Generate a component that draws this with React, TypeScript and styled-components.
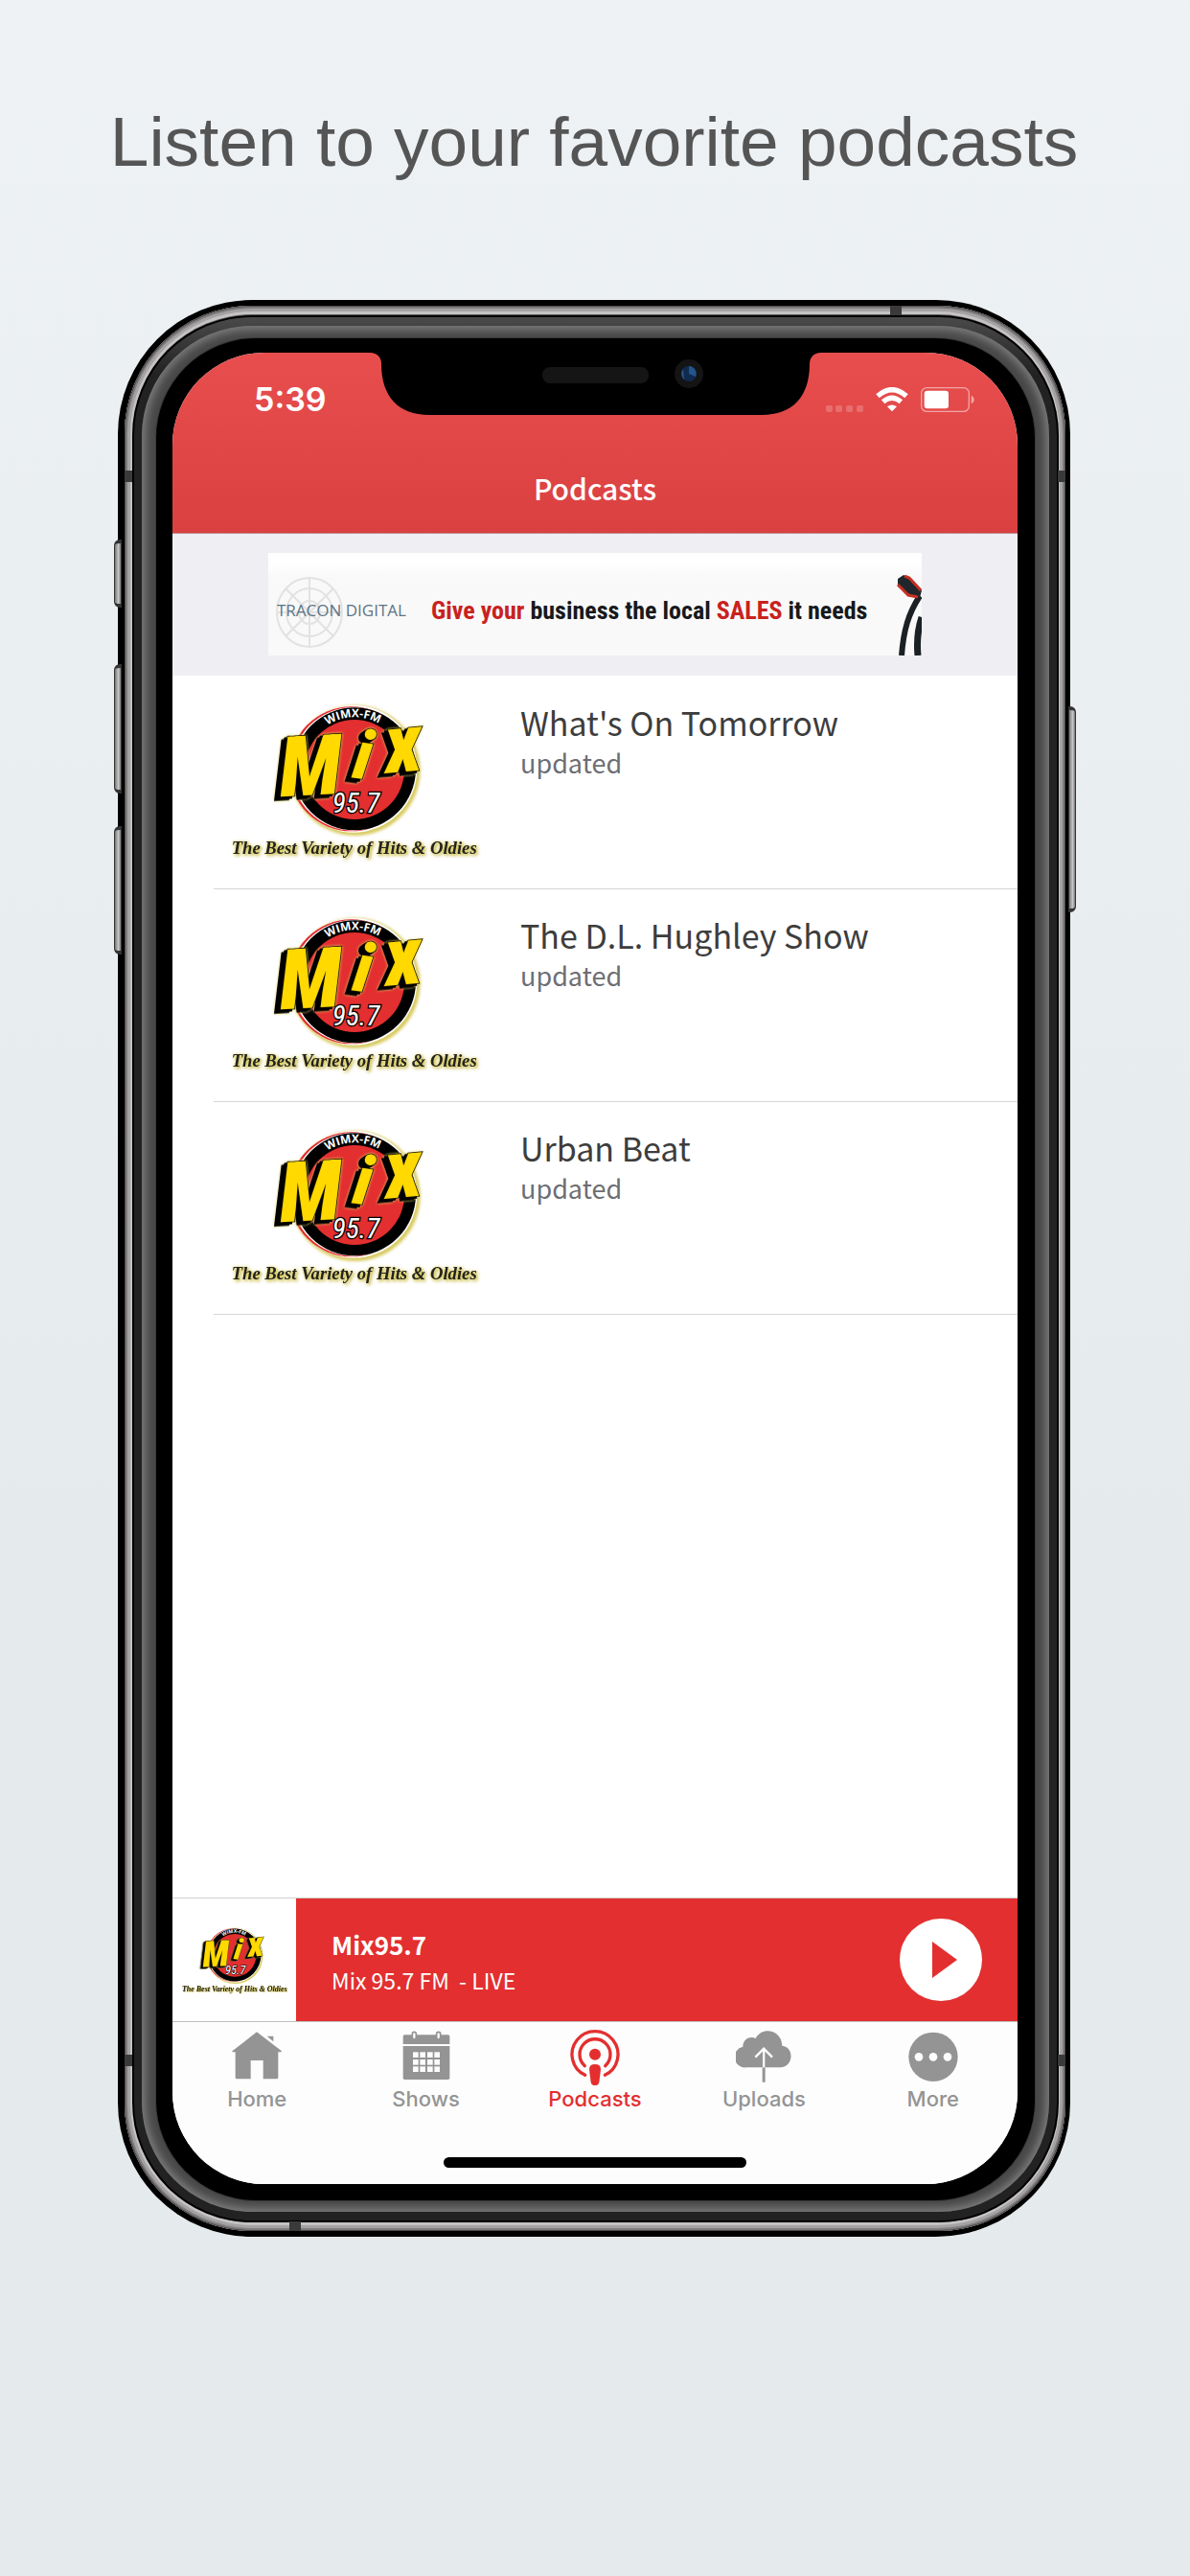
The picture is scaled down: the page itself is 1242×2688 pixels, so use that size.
import React from "react";
import styled, { createGlobalStyle, css } from "styled-components";

const red = "#e32f2f";
const grey = "#949494";
const sourceSans = `"Noto Sans CJK SC", "Noto Sans", sans-serif`;
const condensed = "Roboto Condensed, Liberation Sans Narrow, Roboto, sans-serif";

const GlobalStyle = createGlobalStyle`
  *, *::before, *::after { box-sizing: border-box; }
  html { min-height: 100%; background: linear-gradient(#eef2f5, #e5eaed 60%); }
  body { margin: 0; }
  a { color: inherit; text-decoration: none; }
  button { border: 0; padding: 0; background: none; cursor: pointer; font: inherit; color: inherit; }
  h1, h2, h3, p, ul { margin: 0; padding: 0; font-weight: inherit; }
  svg { display: block; }
`;

const Page = styled.div`
  display: flex;
  flex-direction: column;
  align-items: center;
  padding: 104px 2px 354px 0;
  min-height: 100vh;
`;

const Headline = styled.h1`
  font: 400 73px/88px "Liberation Sans", Arial, sans-serif;
  color: #555;
  text-align: center;
  margin-bottom: 121px;
`;

const Phone = styled.div`
  position: relative;
  width: 100%;
  max-width: 994px;
  padding: 6px 5px 6px 7px;
  border-radius: 140px;
  background: #000;
`;

const Steel = styled.div`
  padding: 10px 7px 9px 8px;
  border-radius: 133px;
  background: #575555;
  box-shadow: inset 0 0 0 1px #4a4848, inset 0 0 0 3px #7f7c7d, inset 0 0 0 6px #a5a2a3, inset 0 0 0 9px #c4c2c2;
`;

const Groove = styled.div`
  padding: 2px;
  border-radius: 125px;
  background: #000;
`;

const Gasket = styled.div`
  padding: 9px 8px;
  border-radius: 123px;
  background: linear-gradient(#4a4a4a, #222 60px);
`;

const Bevel = styled.div`
  padding: 13px 15px 12px;
  border-radius: 115px;
  background: #484848;
  box-shadow: inset 0 0 8px 4px #7c7c7c;
`;

const Glass = styled.div`
  padding: 15px 18px 17px 17px;
  border-radius: 104px;
  background: #000;
  box-shadow: 0 0 0 1px #3a3a3a;
`;

const Screen = styled.main`
  position: relative;
  display: flex;
  flex-direction: column;
  min-height: 1911px;
  overflow: hidden;
  border-radius: 96px;
  background: #fff;
`;

const SideKey = styled.span<{ $side: "left" | "right"; $top: number; $length: number }>`
  position: absolute;
  top: ${(p) => p.$top}px;
  ${(p) => p.$side}: ${(p) => (p.$side === "left" ? -4 : -6)}px;
  width: 8px;
  height: ${(p) => p.$length}px;
  border: 1px solid #333;
  border-width: 4px 1px;
  border-radius: ${(p) => (p.$side === "left" ? "6px 0 0 6px" : "0 6px 6px 0")};
  background: linear-gradient(90deg, #777, #c8c8c8 60%, #777);
`;

const Antenna = styled.span<{ $edge: "top" | "bottom" | "left" | "right"; $at: number }>`
  position: absolute;
  background: #3a3a3a;
  ${(p) =>
    p.$edge === "top" || p.$edge === "bottom"
      ? css`
          ${p.$edge}: 6px;
          left: ${p.$at}px;
          width: 12px;
          height: 10px;
        `
      : css`
          ${p.$edge}: ${p.$edge === "left" ? 7 : 5}px;
          top: ${p.$at}px;
          width: 8px;
          height: 12px;
        `}
`;

const NotchArt = styled.svg`
  position: absolute;
  top: 0;
  left: 206px;
`;

const TopBar = styled.header`
  background: linear-gradient(#e84e4e, #da4040);
  color: #fff;
  border-bottom: 1px solid #b98a90;
`;

const StatusBar = styled.div`
  display: flex;
  align-items: center;
  justify-content: space-between;
  height: 98px;
  padding: 0 43px 0 85px;
`;

const Clock = styled.time`
  font: 600 34px/40px Inter, sans-serif;
`;

const StatusIcons = styled.div`
  display: flex;
  align-items: center;
  gap: 13px;
`;

const ScreenTitle = styled.h2`
  font: 500 30px/44px ${sourceSans};
  padding: 21px 0 25px;
  text-align: center;
`;

const AdStrip = styled.aside`
  display: flex;
  justify-content: center;
  padding: 20px 0 21px;
  background: #efeef3;
`;

const Ad = styled.a`
  display: flex;
  align-items: center;
  position: relative;
  width: 682px;
  height: 107px;
  overflow: hidden;
  background: linear-gradient(#fefefe 12px, #f9f9f9 26px);
`;

const AdBrand = styled.span`
  position: relative;
  width: 170px;
  padding-left: 9px;
  font: 400 17px/28px "Open Sans", sans-serif;
  color: #5c7587;
  margin-top: 12px;
  white-space: nowrap;
`;

const AdCopy = styled.span`
  font: 700 26px/40px ${condensed};
  color: #17191d;
  margin-top: 12px;
  white-space: nowrap;
  em {
    font-style: normal;
    color: #c8221e;
  }
`;

const AdTarget = styled.svg`
  position: absolute;
  left: 8px;
  top: 24px;
`;

const AdCables = styled.svg`
  position: absolute;
  right: 0;
  bottom: 0;
`;

const ShowList = styled.ul`
  flex: 1;
  list-style: none;
  padding: 1px 0 0 43px;
`;

const ShowRow = styled.li`
  border-bottom: 1px solid #d6d6d9;
`;

const ShowLink = styled.a`
  display: flex;
  gap: 43px;
  padding: 24px 17px 27px;
`;

const ShowName = styled.h3`
  font: 400 34px/48px ${sourceSans};
  color: #3d3d3d;
`;

const ShowNote = styled.p`
  font: 400 27px/36px ${sourceSans};
  color: #6c6e73;
`;

const LogoArt = styled.svg`
  overflow: visible;
`;

const MixLetters = styled.g`
  fill: #ffd900;
  stroke: #1a1600;
  stroke-width: 5px;
  paint-order: stroke;
  filter: drop-shadow(-9px 5px 0 #000) drop-shadow(-9px 6px 0 #000) drop-shadow(0 0 5px #e3d56c);
`;

const Frequency = styled.text`
  fill: #fff;
  stroke: #000;
  stroke-width: 8px;
  paint-order: stroke;
`;

const Tagline = styled.text`
  fill: #222;
  filter: drop-shadow(0 0 4px #e6d95a) drop-shadow(5px 5px 4px #cbbd58);
`;

const Player = styled.section`
  display: flex;
  height: 130px;
  border-top: 1px solid #cfcfcf;
  border-bottom: 1px solid #c0c0c0;
`;

const Cover = styled.div`
  display: flex;
  align-items: center;
  justify-content: center;
  width: 129px;
`;

const NowPlaying = styled.div`
  flex: 1;
  display: flex;
  align-items: center;
  justify-content: space-between;
  padding: 0 37px;
  background: ${red};
  color: #fff;
`;

const Station = styled.p`
  font: 700 26px/38px ${sourceSans};
  padding-top: 4px;
`;

const Track = styled.p`
  font: 400 23px/36px ${sourceSans};
  white-space: pre;
`;

const PlayButton = styled.button`
  width: 86px;
  height: 86px;
  border-radius: 50%;
  background: #fff;
`;

const TabBar = styled.nav`
  display: grid;
  grid-template-columns: repeat(5, 1fr);
  background: #fdfdfd;
  padding-top: 8px;
`;

const Tab = styled.button<{ $active?: boolean }>`
  display: flex;
  flex-direction: column;
  align-items: center;
  color: ${(p) => (p.$active ? red : grey)};
  font: 500 22px/28px Inter, sans-serif;
`;

const HomeArea = styled.div`
  display: flex;
  justify-content: center;
  padding: 47px 0 17px;
  background: #fdfdfd;
`;

const HomeIndicator = styled.span`
  width: 316px;
  height: 11px;
  border-radius: 6px;
  background: #000;
`;

function MixLogo({ id, width, height }: { id: string; width: number; height: number }) {
  return (
    <LogoArt width={width} height={height} viewBox="120 90 780 510" role="img" aria-label="Mix 95.7 WIMX-FM">
      <defs>
        <filter id={`${id}-glow`} x="-20%" y="-20%" width="140%" height="140%">
          <feGaussianBlur stdDeviation="5" />
        </filter>
        <path id={`${id}-arc`} d="M352 307a158 162 0 0 1 316 0" />
      </defs>
      <circle cx="512" cy="312" r="204" fill="#d9cb62" filter={`url(#${id}-glow)`} />
      <circle cx="507" cy="307" r="199" fill="#fff" />
      <circle cx="500" cy="307" r="195" fill={red} />
      <circle cx="506" cy="307" r="193" fill="#fff" />
      <circle cx="510" cy="307" r="192" fill="#000" />
      <circle cx="510" cy="309" r="156" fill={red} />
      <text fontFamily="Open Sans, sans-serif" fontWeight="700" fontSize="36" fill="#fff" textAnchor="middle">
        <textPath href={`#${id}-arc`} startOffset="49%">
          WIMX-FM
        </textPath>
      </text>
      <MixLetters fontFamily={condensed} fontWeight="900" fontStyle="italic">
        <text x="280" y="394" fontSize="262" transform="rotate(-3 280 394)">
          M
        </text>
        <text x="500" y="334" fontSize="214" transform="rotate(8 500 334)">
          i
        </text>
        <text x="612" y="320" fontSize="256" transform="rotate(-5 612 320)">
          x
        </text>
      </MixLetters>
      <Frequency x="440" y="444" fontFamily={condensed} fontStyle="italic" fontSize="88">
        95.7
      </Frequency>
      <Tagline x="125" y="572" fontFamily="Liberation Serif, serif" fontWeight="700" fontStyle="italic" fontSize="56">
        The Best Variety of Hits &amp; Oldies
      </Tagline>
    </LogoArt>
  );
}

function HomeIcon() {
  return (
    <svg width="58" height="58" viewBox="238 474 174 174" fill="currentColor" aria-hidden="true">
      <path d="M325 481 403 541l-2 3h-9v80q0 4-4 4h-43v-58h-39v58h-44q-4 0-4-4v-80h-9l-1-3z" />
      <path d="M357 494h20v17z" />
    </svg>
  );
}

function CalendarIcon() {
  const cols = [814, 836, 859, 881];
  const rows = [544, 567, 589];
  return (
    <svg width="58" height="58" viewBox="769 474 174 174" fill="currentColor" aria-hidden="true">
      <path d="M783 519v-24q0-5 5-5h136q5 0 5 5v24z" />
      <path d="M783 525h146v100q0 5-5 5H788q-5 0-5-5z" />
      {[818, 894].map((x) => (
        <rect key={x} x={x - 6} y="481" width="12" height="23" rx="6" fill="#fdfdfd" stroke="currentColor" strokeWidth="5" />
      ))}
      {rows.map((y) => cols.map((x) => <rect key={`${x}-${y}`} x={x} y={y} width="17" height="17" fill="#fdfdfd" />))}
    </svg>
  );
}

function PodcastIcon() {
  return (
    <svg width="58" height="58" viewBox="-26 474 174 174" fill="none" stroke="currentColor" strokeWidth="10" strokeLinecap="round" aria-hidden="true">
      <path d="M30 616a72 72 0 1 1 62 0" />
      <path d="M29 587a48 48 0 1 1 64 0" />
      <circle cx="61" cy="551" r="18" fill="currentColor" stroke="none" />
      <path d="M43 598q0-16 18-16t18 16l-5 40q-2 10-13 10t-13-10z" fill="currentColor" stroke="none" />
    </svg>
  );
}

function UploadIcon() {
  return (
    <svg width="58" height="58" viewBox="503 474 174 174" fill="currentColor" aria-hidden="true">
      <path d="M536 592a33 33 0 0 1-11-65c0-26 25-34 40-26 22-40 82-25 83 23 38 4 37 64-4 68z" />
      <path d="M586 592h9v46h-9z" />
      <path d="M590.500 592v-58M564 560l26.500-27 26.500 27" fill="none" stroke="#fdfdfd" strokeWidth="7" />
    </svg>
  );
}

function MoreIcon() {
  return (
    <svg width="58" height="58" viewBox="1034 474 174 174" fill="currentColor" aria-hidden="true">
      <circle cx="1121" cy="559" r="77" />
      {[1076, 1121, 1166].map((x) => (
        <circle key={x} cx={x} cy="559" r="13" fill="#fdfdfd" />
      ))}
    </svg>
  );
}

function Notch() {
  return (
    <NotchArt width="471" height="66" viewBox="0 0 471 66" aria-hidden="true">
      <path d="M0 0C8 0 12 5 12 12 12 46 30 65 62 65H409c32 0 50-19 50-53C459 5 463 0 471 0z" fill="#000" />
      <rect x="180" y="15" width="111" height="17" rx="8" fill="#151515" />
      <circle cx="333" cy="22" r="15" fill="#141414" />
      <circle cx="333" cy="22" r="8" fill="#12294f" />
      <path d="M333 22V14a8 8 0 0 1 7 11z" fill="#22558c" />
      <path d="M327 17a8 8 0 0 0 1 11z" fill="#2f5583" />
    </NotchArt>
  );
}

function Indicators() {
  return (
    <StatusIcons>
      <svg width="39" height="26" viewBox="0 0 39 26" fill="#fff" fillOpacity="0.2" aria-hidden="true">
        {[0, 10, 21, 32].map((x) => (
          <rect key={x} x={x} y="19" width="7" height="7" rx="2" />
        ))}
      </svg>
      <svg width="34" height="26" viewBox="0 0 102 78" fill="none" stroke="#fff" strokeWidth="16" aria-label="Wi-Fi">
        <path d="M6 28q45-40 90 0" />
        <path d="M23 46q28-24 56 0" />
        <path d="M51 76 36 61q15-11 30 0z" fill="#fff" stroke="none" />
      </svg>
      <svg width="58" height="26" viewBox="0 0 174 78" aria-label="Battery">
        <rect x="2" y="2" width="149" height="74" rx="17" fill="none" stroke="#fff" strokeOpacity="0.5" strokeWidth="4" />
        <rect x="11" y="11" width="76" height="56" rx="9" fill="#fff" />
        <path d="M158 26q9 4 9 13t-9 13z" fill="#fff" fillOpacity="0.5" />
      </svg>
    </StatusIcons>
  );
}

const shows = ["What's On Tomorrow", "The D.L. Hughley Show", "Urban Beat"];

const tabs = [
  { label: "Home", Icon: HomeIcon },
  { label: "Shows", Icon: CalendarIcon },
  { label: "Podcasts", Icon: PodcastIcon, active: true },
  { label: "Uploads", Icon: UploadIcon },
  { label: "More", Icon: MoreIcon },
];

export default function App() {
  return (
    <Page>
      <GlobalStyle />
      <Headline>Listen to your favorite podcasts</Headline>
      <Phone>
        <SideKey $side="left" $top={250} $length={71} />
        <SideKey $side="left" $top={380} $length={135} />
        <SideKey $side="left" $top={549} $length={134} />
        <SideKey $side="right" $top={424} $length={215} />
        <Steel>
          <Groove>
            <Gasket>
              <Bevel>
                <Glass>
                  <Screen>
                    <TopBar>
                      <StatusBar>
                        <Clock>5:39</Clock>
                        <Indicators />
                      </StatusBar>
                      <ScreenTitle>Podcasts</ScreenTitle>
                    </TopBar>
                    <Notch />
                    <AdStrip>
                      <Ad href="#tracon">
                        <AdTarget width="70" height="75" viewBox="0 0 70 75" fill="none" stroke="#e2e2e2" strokeWidth="2" aria-hidden="true">
                          <ellipse cx="35" cy="38" rx="34" ry="36" />
                          <ellipse cx="35" cy="38" rx="24" ry="25" />
                          <ellipse cx="35" cy="38" rx="11" ry="12" />
                          <path d="M35 2v72M1 38h68M10 13l50 50M60 13 10 63" />
                        </AdTarget>
                        <AdBrand>TRACON DIGITAL</AdBrand>
                        <AdCopy>
                          <em>Give your</em> business the local <em>SALES</em> it needs
                        </AdCopy>
                        <AdCables width="28" height="84" viewBox="0 0 28 84" fill="none" aria-hidden="true">
                          <path d="M26 22C14 40 9 58 7 84" stroke="#1b2024" strokeWidth="6" />
                          <path d="M28 44q-6 18-4 40" stroke="#1b2024" strokeWidth="7" />
                          <path d="M3 4 9 0l7 4 12 12-2 8-10-3L3 12z" fill="#20262b" />
                          <path d="M3 10l11 11 10 2M10 1l5 2 12 13" stroke="#c43122" strokeWidth="3" />
                        </AdCables>
                      </Ad>
                    </AdStrip>
                    <ShowList>
                      {shows.map((name, i) => (
                        <ShowRow key={name}>
                          <ShowLink href="#show">
                            <MixLogo id={`show${i}`} width={260} height={170} />
                            <div>
                              <ShowName>{name}</ShowName>
                              <ShowNote>updated</ShowNote>
                            </div>
                          </ShowLink>
                        </ShowRow>
                      ))}
                    </ShowList>
                    <Player>
                      <Cover>
                        <MixLogo id="cover" width={112} height={73} />
                      </Cover>
                      <NowPlaying>
                        <div>
                          <Station>Mix95.7</Station>
                          <Track>{"Mix 95.7 FM  - LIVE"}</Track>
                        </div>
                        <PlayButton aria-label="Play">
                          <svg width="86" height="86" viewBox="0 0 86 86" fill={red} aria-hidden="true">
                            <path d="M34 24v38l26-19z" />
                          </svg>
                        </PlayButton>
                      </NowPlaying>
                    </Player>
                    <TabBar>
                      {tabs.map(({ label, Icon, active }) => (
                        <Tab key={label} $active={active} aria-current={active ? "page" : undefined}>
                          <Icon />
                          {label}
                        </Tab>
                      ))}
                    </TabBar>
                    <HomeArea>
                      <HomeIndicator />
                    </HomeArea>
                  </Screen>
                </Glass>
              </Bevel>
            </Gasket>
          </Groove>
        </Steel>
        <Antenna $edge="top" $at={806} />
        <Antenna $edge="bottom" $at={179} />
        <Antenna $edge="left" $at={178} />
        <Antenna $edge="right" $at={178} />
        <Antenna $edge="left" $at={1831} />
        <Antenna $edge="right" $at={1831} />
      </Phone>
    </Page>
  );
}
